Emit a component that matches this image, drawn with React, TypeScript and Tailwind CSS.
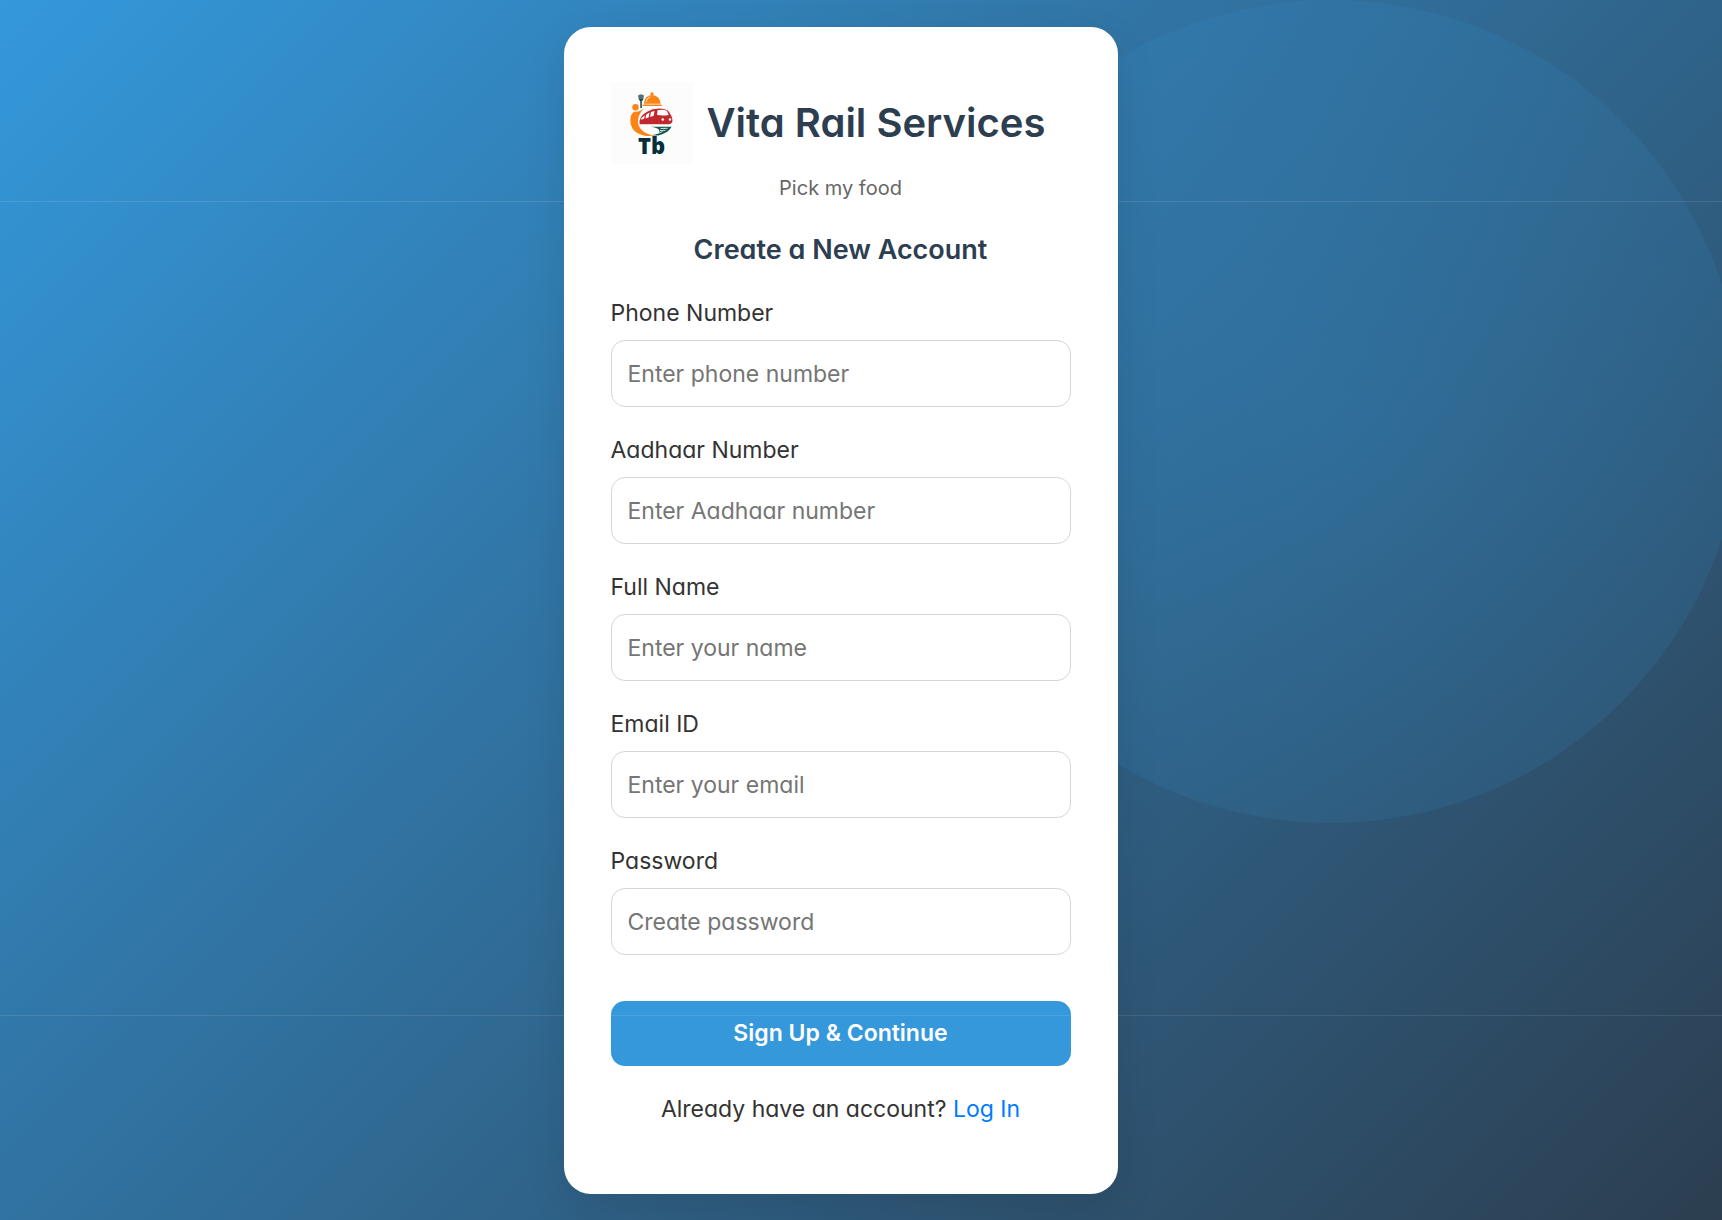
const fields = [
  { id: 'phone', label: 'Phone Number', placeholder: 'Enter phone number', type: 'tel' },
  { id: 'aadhaar', label: 'Aadhaar Number', placeholder: 'Enter Aadhaar number', type: 'text' },
  { id: 'name', label: 'Full Name', placeholder: 'Enter your name', type: 'text' },
  { id: 'email', label: 'Email ID', placeholder: 'Enter your email', type: 'email' },
  { id: 'password', label: 'Password', placeholder: 'Create password', type: 'password' },
];

function Logo() {
  return (
    <svg viewBox="0 0 82 82" className="size-[82px] shrink-0 bg-[#fcfcfc]" role="img" aria-label="Tb logo">
      <path d="M27.500 13q2.500-1 5 0 .5 5-1.700 6.200V26h-1.500v-6.800Q27 18 27.500 13Z" fill="#17474b" />
      <path d="M29 13v4M31 13v4" stroke="#fcfcfc" strokeWidth=".5" />
      <circle cx="41" cy="12" r="1.700" fill="#fb8417" />
      <path d="M32.800 21.800q.6-8.400 8.200-8.800 7.800.4 8.600 8.800Z" fill="#fb8417" />
      <path d="M35 20.200q.8-4.300 4.200-5.500" fill="none" stroke="#fff" strokeWidth=".8" />
      <rect x="31.500" y="22.500" width="19.300" height="1.500" rx=".6" fill="#fb8417" />
      <circle cx="24.500" cy="25.300" r="3.200" fill="#fb8417" />
      <path d="M33.300 26q-4 4-9.500 3.600-4.300 2-4.500 8.400 0 9 7 13 7 4.300 18 2.600-11-1.200-15.300-7.600Q23.500 36.500 33.300 26Z" fill="#fb8417" />
      <path d="M28 42.800Q27 34 36 29.300q5-3.300 12-3.300 7.500.2 10.300 3.500 3.500 5 3.700 8.500.2 4-4.500 4.800Z" fill="#c0282d" stroke="#fcfcfc" strokeWidth="1" />
      <path d="m30.500 36 3.300-2.700-.7 3.500-3.300 1ZM35.200 32.400l3.300-1.800-.7 4.700-3.300 1.100ZM39.900 30l3.600-1.100-.8 4.900-3.500 1.100ZM46.500 28.200q6-1 9.300.5l2 4.200q-5.500 1-11.700.2Z" fill="#fff" />
      <circle cx="51.800" cy="37.500" r="1.300" fill="#fff" />
      <circle cx="59" cy="37.500" r="1.200" fill="#fff" />
      <path d="M40 44.800h20.600Q57 51.500 47.500 53.400q-5 .3-6-.4 6.500-1 7-3.500 0-3.500-8.500-4.700Z" fill="#175850" />
      <path d="m49.500 46.500 7-.2M49 48.500l5.500-.2M46.500 51.500l5-2" stroke="#fff" strokeWidth=".8" />
      <text x="40.500" y="72" textAnchor="middle" fill="#052f3c" className="font-['Open_Sans',sans-serif] text-[22px] font-extrabold">Tb</text>
    </svg>
  );
}

export default function App() {
  return (
    <main className="relative flex min-h-screen items-center justify-center overflow-hidden bg-linear-[135deg,#3498db,#2c3e50] py-[27px] pr-[57px] pl-4 font-[Inter,sans-serif] text-[23px] leading-[33px] text-[#333] [font-feature-settings:'cv11']">
      <div aria-hidden="true" className="absolute top-0 -right-5 size-[823px] rounded-full bg-[radial-gradient(circle,rgba(52,152,219,0.22),rgba(52,152,219,0.12)_70%)]" />
      <section className="relative w-full max-w-[554px] rounded-[27px] bg-white px-[47px] pt-[55px] pb-[68px] shadow-[0_14px_41px_rgba(0,0,0,0.1)]">
        <header className="text-center">
          <div className="flex items-center gap-[14px]">
            <Logo />
            <h1 className="text-[40px] leading-[58px] font-semibold whitespace-nowrap text-[#2c3e50]">Vita Rail Services</h1>
          </div>
          <p className="mt-2 text-[20px] leading-[33px] text-[#666]">Pick my food</p>
        </header>
        <form onSubmit={(e) => e.preventDefault()}>
          <h2 className="mt-[25px] mb-[27px] text-center text-[27px] leading-10 font-semibold text-[#2c3e50]">Create a New Account</h2>
          {fields.map((f) => (
            <div key={f.id} className="mb-[27px]">
              <label htmlFor={f.id} className="mb-[10px] block">{f.label}</label>
              <input
                id={f.id}
                type={f.type}
                placeholder={f.placeholder}
                className="block h-[67px] w-full rounded-[14px] border border-[#d6d6d6] bg-white px-4 outline-none placeholder:text-[#757575] focus:border-[#3498db]"
              />
            </div>
          ))}
          <button type="submit" className="mt-[46px] block h-[65px] w-full cursor-pointer rounded-[14px] bg-[#3498db] font-semibold text-white">
            Sign Up &amp; Continue
          </button>
        </form>
        <p className="mt-[27px] text-center">
          Already have an account? <a href="#login" className="text-[#007bff]">Log In</a>
        </p>
      </section>
      <div aria-hidden="true" className="pointer-events-none absolute inset-x-0 top-[201px] h-px bg-white/10" />
      <div aria-hidden="true" className="pointer-events-none absolute inset-x-0 top-[1015px] h-px bg-white/10" />
    </main>
  );
}
